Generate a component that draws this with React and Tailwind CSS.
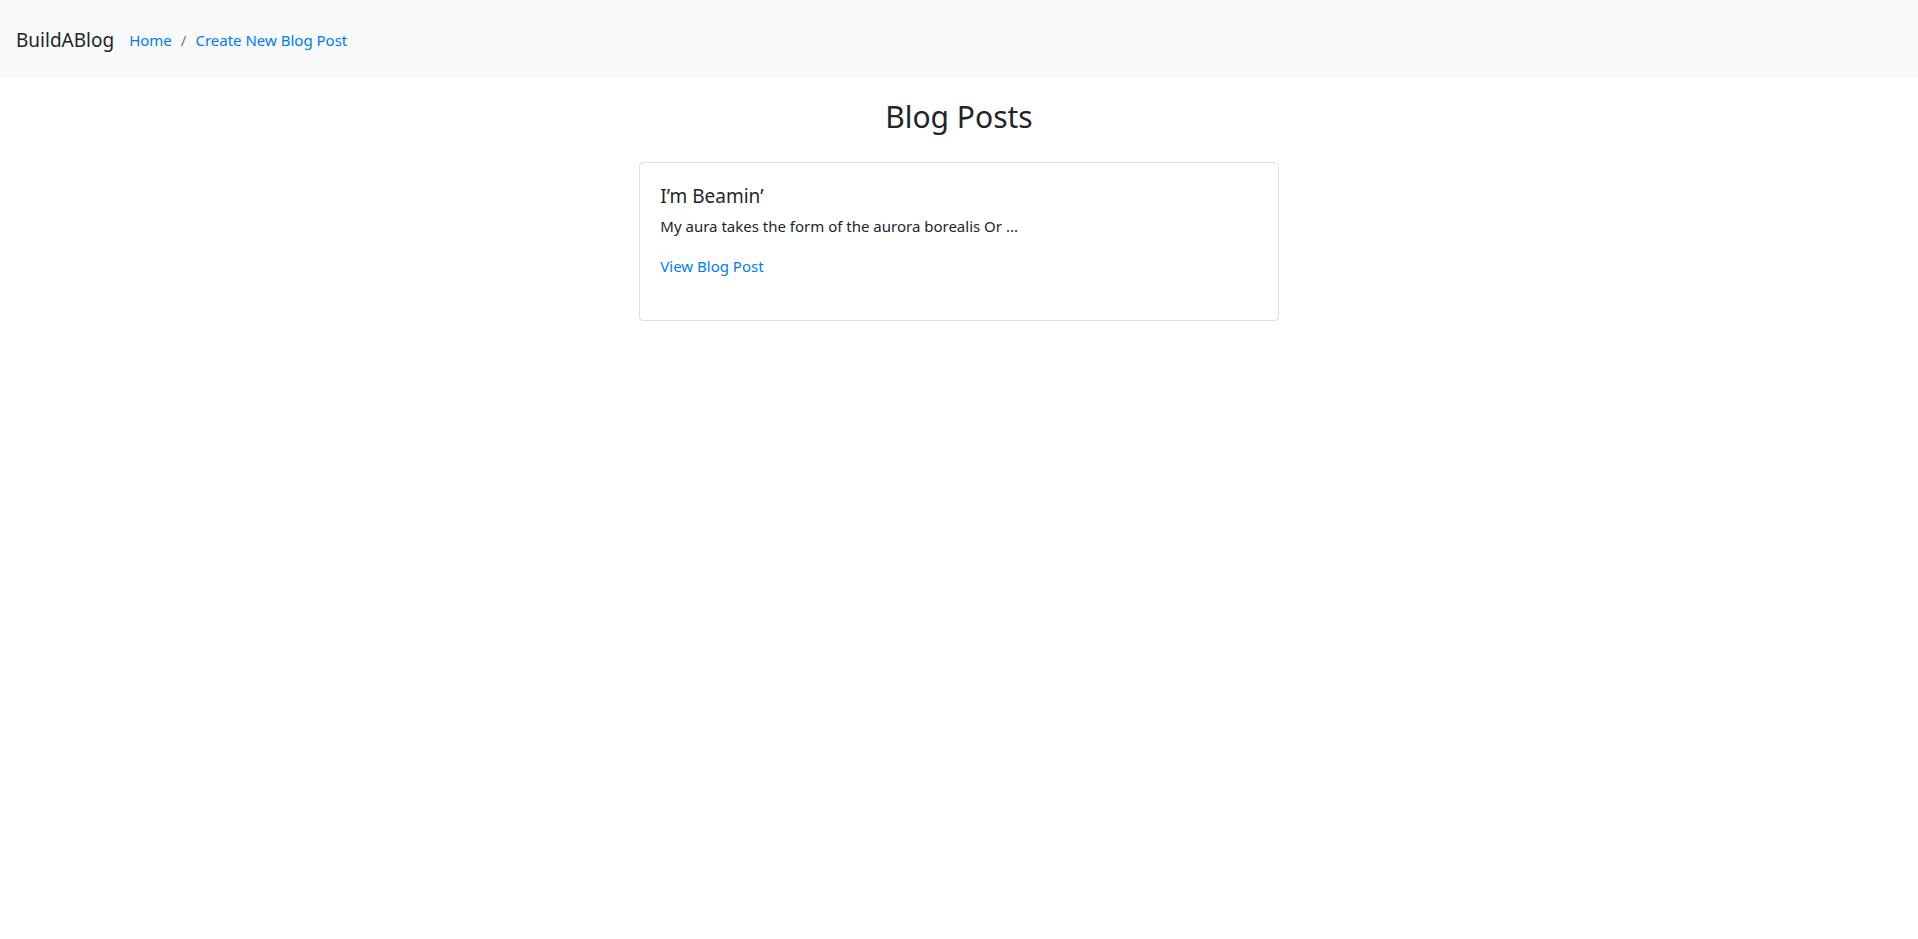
import React from "react";

const posts = [
  {
    id: 1,
    title: "I\u2019m Beamin\u2019",
    excerpt: "My aura takes the form of the aurora borealis Or ...",
  },
];

const App = () => {
  return (
    <div className="min-h-screen bg-white text-[#212529] font-['Noto_Sans','Open_Sans',sans-serif]">
      {/* navbar */}
      <nav className="h-[78px] bg-[#f8f9fa] flex items-center px-4 pt-[1px]">
        <a href="#" className="text-[19px] text-[#212529] mr-[15px] leading-[30px]">
          BuildABlog
        </a>
        <ol className="flex items-center text-[15px] leading-6">
          <li>
            <a href="#" className="text-[#007bff]">Home</a>
          </li>
          <li className="flex items-center">
            <span className="px-[9px] text-[#6c757d]">/</span>
            <a href="#" className="text-[#007bff]">Create New Blog Post</a>
          </li>
        </ol>
      </nav>

      {/* posts */}
      <h2 className="text-[30px] leading-[38px] text-center mt-[20px] mb-[26px]">Blog Posts</h2>
      <div className="flex flex-col items-center gap-4">
        {posts.map((post) => (
          <div
            key={post.id}
            className="w-1/3 h-[159px] border border-[rgba(0,0,0,0.125)] rounded-[4px] px-5 pt-[21px]"
          >
            <h5 className="text-[19px] leading-6 mb-[6px]">{post.title}</h5>
            <p className="text-[15px] leading-6 mb-4">{post.excerpt}</p>
            <a href="#" className="text-[#007bff] text-[15px] leading-6">View Blog Post</a>
          </div>
        ))}
      </div>
    </div>
  );
};

export default App;
